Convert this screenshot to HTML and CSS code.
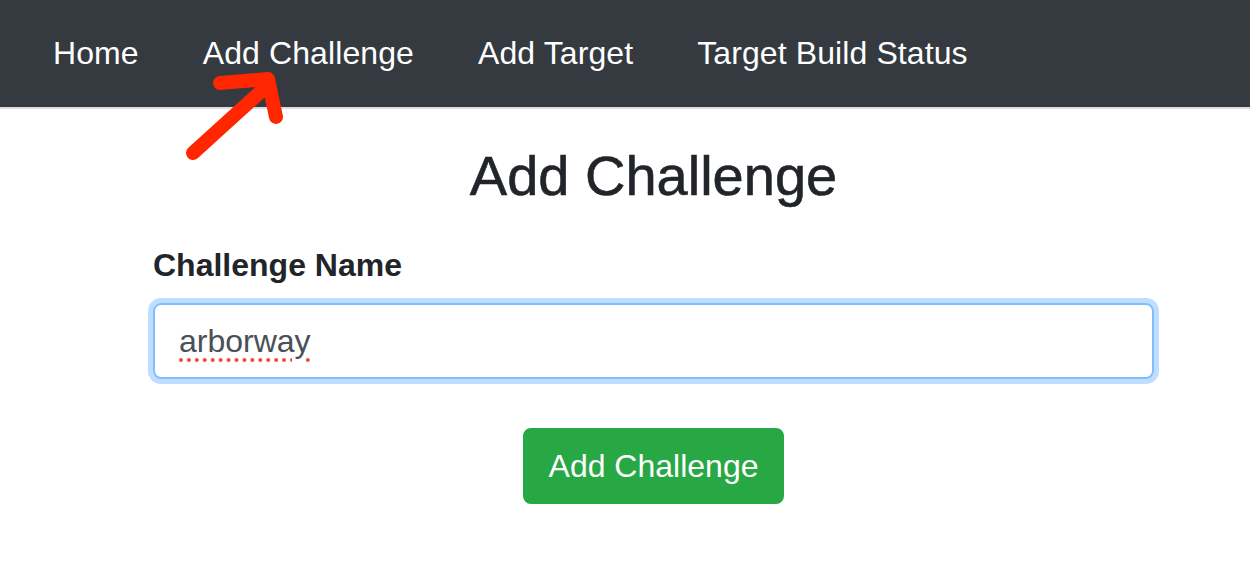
FILE: index.html
```html
<!DOCTYPE html>
<html>
<head>
<meta charset="utf-8">
<link rel="stylesheet" href="styles.css">
</head>
<body>
<nav class="navbar">
  <a class="nav-link" href="#">Home</a>
  <a class="nav-link" href="#">Add Challenge</a>
  <a class="nav-link" href="#">Add Target</a>
  <a class="nav-link" href="#">Target Build Status</a>
</nav>
<svg class="arrow" width="120" height="100" viewBox="0 0 120 100">
  <path d="M13 92 L88 24 M40 22 L88 18 L96 56" fill="none" stroke="#ff2600" stroke-width="14" stroke-linecap="round" stroke-linejoin="round"/>
</svg>
<main class="container">
  <h1 class="title">Add Challenge</h1>
  <form class="form">
    <label class="label">Challenge Name</label>
    <div class="input"><span class="typed">arborway</span></div>
    <div class="actions">
      <button type="button" class="btn">Add Challenge</button>
    </div>
  </form>
</main>
</body>
</html>
```
FILE: styles.css
```css
html, body {
  margin: 0;
  padding: 0;
  background: #fff;
  font-family: "Liberation Sans", Arial, sans-serif;
  color: #212529;
}
.navbar {
  height: 107px;
  background: #343a40;
  border-bottom: 2px solid #dcdde0;
  display: flex;
  align-items: center;
  padding-left: 21px;
  box-sizing: content-box;
}
.nav-link {
  color: #fff;
  text-decoration: none;
  font-size: 32px;
  line-height: 48px;
  padding: 0 32px;
  margin-top: -2px;
  letter-spacing: 0.1px;
}
.arrow {
  position: absolute;
  left: 180px;
  top: 61px;
}
.container {
  width: 1001px;
  margin-left: 153px;
  padding-top: 33px;
}
.title {
  margin: 0;
  font-size: 56px;
  font-weight: 500;
  line-height: 67px;
  text-align: center;
  -webkit-text-stroke: 0.6px #212529;
}
.form {
  margin-top: 32px;
  display: flex;
  flex-direction: column;
}
.label {
  font-size: 32px;
  font-weight: 700;
  line-height: 48px;
  margin-bottom: 14px;
}
.input {
  height: 76px;
  box-sizing: border-box;
  border: 2px solid #80bdff;
  border-radius: 8px;
  box-shadow: 0 0 0 5px rgba(0, 123, 255, 0.25);
  padding: 12px 24px;
  font-size: 32px;
  line-height: 48px;
  color: #495057;
}
.typed {
  text-decoration: underline dotted #f24a3f;
  text-decoration-thickness: 4px;
  text-underline-offset: 6px;
}
.actions {
  display: flex;
  justify-content: center;
  margin-top: 49px;
}
.btn {
  height: 76px;
  font-family: "Liberation Sans", Arial, sans-serif;
  font-size: 32px;
  line-height: 48px;
  padding: 12px 24px;
  border: 2px solid #28a745;
  background: #28a745;
  color: #fff;
  border-radius: 8px;
}
```
